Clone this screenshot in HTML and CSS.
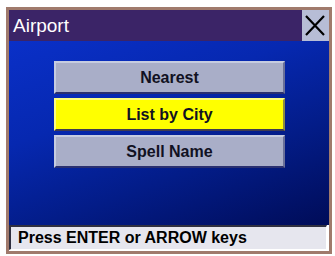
FILE: index.html
```html
<!DOCTYPE html>
<html>
<head>
<meta charset="utf-8">
<link rel="stylesheet" href="styles.css">
</head>
<body>
<div class="frame">
  <div class="titlebar">
    <div class="title">Airport</div>
    <div class="close">
      <svg width="27" height="31" viewBox="0 0 27 31"><path d="M4 6 L22 25 M22 6 L4 25" stroke="#000" stroke-width="2.2" fill="none"/></svg>
    </div>
  </div>
  <div class="main">
    <div class="menu">
      <div class="btn">Nearest</div>
      <div class="btn sel">List by City</div>
      <div class="btn">Spell Name</div>
    </div>
  </div>
  <div class="status">Press ENTER or ARROW keys</div>
</div>
</body>
</html>
```
FILE: styles.css
```css
html, body { margin: 0; padding: 0; background: #fff; }
body { width: 335px; height: 256px; overflow: hidden; font-family: "Liberation Sans", Arial, sans-serif; }
.frame {
  margin: 7px 0 0 6px;
  width: 320px;
  height: 241px;
  border: 3px solid #a07a6c;
  display: flex;
  flex-direction: column;
}
.titlebar {
  height: 31px;
  background: #3b2467;
  display: flex;
  align-items: stretch;
}
.title {
  flex: 1;
  color: #fff;
  font-size: 19px;
  line-height: 31px;
  padding-left: 4px;
}
.close {
  width: 27px;
  background: #b7bdd6;
  display: flex;
}
.main {
  height: 184px;
  background: linear-gradient(160deg, #0a30c8 0%, #0628b0 35%, #031c88 65%, #000c58 100%);
  display: flex;
  justify-content: center;
}
.menu {
  margin-top: 20px;
  width: 231px;
  margin-left: 1px;
  display: flex;
  flex-direction: column;
  gap: 4px;
}
.btn {
  height: 29px;
  box-sizing: content-box;
  background: #a9aec8;
  border: 2px solid;
  border-color: #c6cce0 #6a7098 #2a3070 #c6cce0;
  text-align: center;
  font-weight: bold;
  font-size: 16px;
  line-height: 29px;
  color: #111122;
}
.btn.sel {
  background: #ffff00;
  border-color: #fdfd80 #8c8c40 #403c50 #fdfd80;
}
.status {
  height: 22px;
  margin: 0 2px 0 0;
  background: #e6e6ee;
  border-top: 2px solid #303040;
  border-left: 2px solid #303040;
  border-right: 1px solid #fff;
  border-bottom: 1px solid #fff;
  font-weight: bold;
  font-size: 16px;
  line-height: 22px;
  padding-left: 7px;
  color: #000;
}
```
